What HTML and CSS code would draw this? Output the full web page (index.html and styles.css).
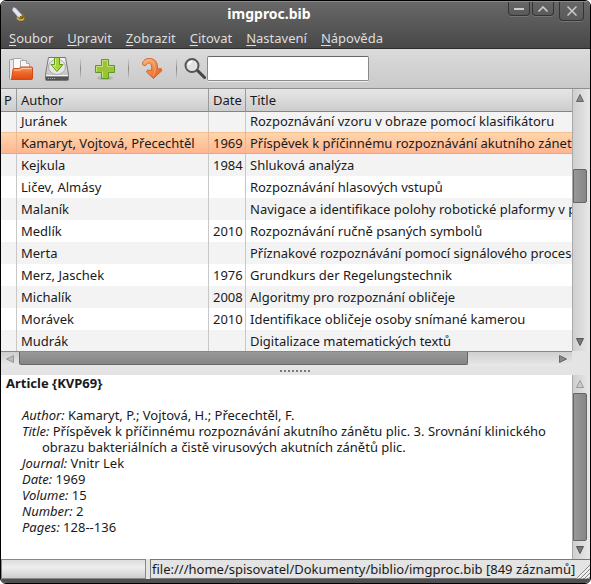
FILE: index.html
```html
<!DOCTYPE html>
<html lang="cs">
<head>
<meta charset="utf-8">
<meta name="viewport" content="width=device-width, initial-scale=1">
<title>imgproc.bib</title>
<link rel="stylesheet" href="styles.css">
</head>
<body>
<div class="window">
  <header class="frame-top">
    <div class="titlebar">
      <svg class="app-icon" width="16" height="16" viewBox="0 0 16 16" aria-hidden="true">
        <path d="M7 8c-1 4 3 7 6 5s2-5 0-7z" fill="#8a6a14"/>
        <path d="M7 10.500c1 3 5 3.500 7 1" fill="none" stroke="#d9b53a" stroke-width="1.500"/>
        <path d="M3 .5l2.500.5L12 8l-1.500 2.500L8 10 2.500 3.500z" fill="#e4e4f4" stroke="#a9a9c8" stroke-width=".5"/>
        <path d="M10 9l2 2.500" stroke="#5d4708"/>
      </svg>
      <h1 class="title">imgproc.bib</h1>
      <div class="window-buttons">
        <button class="wb" type="button" aria-label="Minimalizovat"><svg width="12" height="12" viewBox="0 0 12 12"><path d="M1 6h10" stroke="#ccc" stroke-width="2"/></svg></button>
        <button class="wb" type="button" aria-label="Maximalizovat"><svg width="12" height="12" viewBox="0 0 12 12"><path d="M1.500 8.500L6 4l4.500 4.500" fill="none" stroke="#ccc" stroke-width="1.600"/></svg></button>
        <button class="wb wb-close" type="button" aria-label="Zavřít"><svg width="12" height="12" viewBox="0 0 12 12"><path d="M1.500 1.500l9 9m0-9l-9 9" stroke="#ccc" stroke-width="1.500"/></svg></button>
      </div>
    </div>
    <nav class="menubar">
      <button type="button"><u>S</u>oubor</button>
      <button type="button"><u>U</u>pravit</button>
      <button type="button"><u>Z</u>obrazit</button>
      <button type="button"><u>C</u>itovat</button>
      <button type="button"><u>N</u>astavení</button>
      <button type="button"><u>N</u>ápověda</button>
    </nav>
  </header>

  <div class="toolbar">
    <button class="tool" type="button" aria-label="Otevřít">
      <svg width="24" height="24" viewBox="0 0 24 24">
        <defs><linearGradient id="fold" x2="0" y2="1"><stop stop-color="#f4a06a"/><stop offset=".45" stop-color="#ee6a2a"/><stop offset="1" stop-color="#e04a10"/></linearGradient></defs>
        <path d="M.5 3.500q0-1 1-1h3v20h-3q-1 0-1-1z" fill="#e9e9e9" stroke="#999"/>
        <path d="M4.500 1.500h8l3 3v14h-11z" fill="#fafafa" stroke="#aaa"/>
        <path d="M11.500 3.500h6l3 3v12h-9z" fill="#f6f6f6" stroke="#aaa"/>
        <path d="M17.500 3.500v3h3" fill="#ddd" stroke="#aaa"/>
        <path d="M2.500 22.500L4 12.500q0-1 1-1h5l2-1.500h10.500q1 0 1 1v10.500q0 1-1 1z" fill="url(#fold)" stroke="#cf4a17"/>
        <path d="M5 13h6l2-1.500h9.500" fill="none" stroke="#fbc7a4"/>
      </svg>
    </button>
    <button class="tool" type="button" aria-label="Uložit">
      <svg width="24" height="24" viewBox="0 0 24 24">
        <defs><linearGradient id="disk" x2="0" y2="1"><stop stop-color="#f4f4f4"/><stop offset="1" stop-color="#b5b5b5"/></linearGradient></defs>
        <path d="M3.500.5h17l3 17v5q0 1-1 1h-21q-1 0-1-1v-5z" fill="url(#disk)" stroke="#777"/>
        <ellipse cx="12" cy="10" rx="8.500" ry="7.500" fill="#e6e6e6" stroke="#aaa"/>
        <path d="M1 19.500h22v3.500H1z" fill="#555"/>
        <path d="M1 18.500h22" stroke="#f5f5f5"/>
        <path d="M3 21.500h8" stroke="#aaa" stroke-dasharray="1 1"/>
        <path d="M9.500.5h5v7h3.500L12 14.500 6 7.500h3.500z" fill="#a9d436" stroke="#5a9a16"/>
        <path d="M10.500 1.500v7H8l4 4.500" fill="none" stroke="#d5ee86"/>
      </svg>
    </button>
    <span class="sep"></span>
    <button class="tool" type="button" aria-label="Přidat">
      <svg width="24" height="24" viewBox="0 0 24 24">
        <ellipse cx="12" cy="21" rx="8" ry="2" fill="#999" opacity=".5"/>
        <path d="M8.500 2.500h7v6h6v7h-6v6h-7v-6h-6v-7h6z" fill="#9dc437" stroke="#5d9a22" stroke-linejoin="round"/>
        <path d="M9.500 14.500v6m-6-6v-5h6v-6h5v6h6" fill="none" stroke="#c5e07a"/>
      </svg>
    </button>
    <span class="sep"></span>
    <button class="tool" type="button" aria-label="Vložit citaci">
      <svg width="24" height="24" viewBox="0 0 24 24">
        <defs><linearGradient id="arr" x2="1" y2="1"><stop stop-color="#f6b98c"/><stop offset=".5" stop-color="#ee8c45"/><stop offset="1" stop-color="#e8501a"/></linearGradient></defs>
        <path d="M1.500 7C2 3 5 1.500 8.500 1.500c5.500 0 8.500 4 8 10.500l3.500-.5 1 2-8.500 8L5.500 15l1-2 4 .5c.5-5-.5-7.500-3-7.500-2 0-1.500 2.500-3.500 2.500C2.500 8.500 1.500 8 1.500 7z" fill="url(#arr)" stroke="#d4652c" stroke-linejoin="round"/>
        <path d="M4 4.500c5-3.500 10-1 10 8.500l-1.500 6" fill="none" stroke="#f8c39b" opacity=".6"/>
      </svg>
    </button>
    <span class="sep"></span>
    <form class="search">
      <label for="q" aria-label="Hledat">
        <svg width="22" height="24" viewBox="0 0 22 24">
          <path d="M13 13l7.500 7.500" stroke="#444" stroke-width="3" stroke-linecap="round"/>
          <circle cx="8" cy="8.500" r="6.500" fill="#e2e2e2" stroke="#555" stroke-width="2"/>
          <path d="M4.500 8q.5-3 3.500-3.500" fill="none" stroke="#fff" stroke-width="1.500"/>
        </svg>
      </label>
      <input id="q" type="text">
    </form>
  </div>

  <section class="list-pane">
    <div class="table-wrap">
      <table>
        <colgroup><col class="c-p"><col class="c-author"><col class="c-date"><col></colgroup>
        <thead><tr><th>P</th><th>Author</th><th>Date</th><th>Title</th></tr></thead>
        <tbody>
          <tr><td></td><td>Juránek</td><td></td><td>Rozpoznávání vzoru v obraze pomocí klasifikátoru</td></tr>
          <tr class="selected"><td></td><td>Kamaryt, Vojtová, Přecechtěl</td><td>1969</td><td>Příspěvek k příčinnému rozpoznávání akutního zánetu</td></tr>
          <tr><td></td><td>Kejkula</td><td>1984</td><td>Shluková analýza</td></tr>
          <tr><td></td><td>Ličev, Almásy</td><td></td><td>Rozpoznávání hlasových vstupů</td></tr>
          <tr><td></td><td>Malaník</td><td></td><td>Navigace a identifikace polohy robotické plaformy v p</td></tr>
          <tr><td></td><td>Medlík</td><td>2010</td><td>Rozpoznávání ručně psaných symbolů</td></tr>
          <tr><td></td><td>Merta</td><td></td><td>Příznakové rozpoznávání pomocí signálového proceso</td></tr>
          <tr><td></td><td>Merz, Jaschek</td><td>1976</td><td>Grundkurs der Regelungstechnik</td></tr>
          <tr><td></td><td>Michalík</td><td>2008</td><td>Algoritmy pro rozpoznání obličeje</td></tr>
          <tr><td></td><td>Morávek</td><td>2010</td><td>Identifikace obličeje osoby snímané kamerou</td></tr>
          <tr><td></td><td>Mudrák</td><td></td><td>Digitalizace matematických textů</td></tr>
        </tbody>
      </table>
    </div>
    <div class="vbar">
      <button type="button" aria-label="Nahoru"><svg width="8" height="8" viewBox="0 0 8 8"><path d="M4 .5L7.500 7.500h-7z" fill="#888" stroke="#666"/></svg></button>
      <div class="track list-track"><div class="thumb"></div></div>
      <button type="button" aria-label="Dolů"><svg width="8" height="8" viewBox="0 0 8 8"><path d="M4 7.500L.5.5h7z" fill="#777" stroke="#555"/></svg></button>
    </div>
    <div class="hbar">
      <button type="button" aria-label="Vlevo"><svg width="8" height="8" viewBox="0 0 8 8"><path d="M.5 4L7.500.5v7z" fill="#bbb" stroke="#999"/></svg></button>
      <div class="track"><div class="thumb"></div></div>
      <button type="button" aria-label="Vpravo"><svg width="8" height="8" viewBox="0 0 8 8"><path d="M7.500 4L.5.500v7z" fill="#888" stroke="#666"/></svg></button>
    </div>
  </section>

  <div class="splitter"><span class="grip"></span></div>

  <section class="detail-pane">
    <article class="detail">
      <h2>Article {KVP69}</h2>
      <p><i>Author:</i> Kamaryt, P.; Vojtová, H.; Přecechtěl, F.</p>
      <p><i>Title:</i> Příspěvek k příčinnému rozpoznávání akutního zánětu plic. 3. Srovnání klinického obrazu bakteriálních a čistě virusových akutních zánětů plic.</p>
      <p><i>Journal:</i> Vnitr Lek</p>
      <p><i>Date:</i> 1969</p>
      <p><i>Volume:</i> 15</p>
      <p><i>Number:</i> 2</p>
      <p><i>Pages:</i> 128--136</p>
    </article>
    <div class="vbar">
      <button type="button" aria-label="Nahoru"><svg width="8" height="8" viewBox="0 0 8 8"><path d="M4 .5L7.500 7.500h-7z" fill="#ccc" stroke="#999"/></svg></button>
      <div class="track"><div class="thumb"></div></div>
      <button type="button" aria-label="Dolů"><svg width="8" height="8" viewBox="0 0 8 8"><path d="M4 7.500L.5.5h7z" fill="#777" stroke="#555"/></svg></button>
    </div>
  </section>

  <footer class="statusbar">
    <div class="progress"></div>
    <div class="status">file:///home/spisovatel/Dokumenty/biblio/imgproc.bib [849 záznamů]</div>
    <svg class="resize" width="15" height="15" viewBox="0 0 15 15" aria-hidden="true">
      <path d="M1 15L15 1M5 15L15 5M9 15l6-6M13 15l2-2" stroke="#888"/>
      <path d="M2.500 15L15 2.500M6.500 15L15 6.500M10.500 15l4.500-4.500" stroke="#fff"/>
    </svg>
  </footer>
  <div class="frame-bottom"></div>
</div>
</body>
</html>
```
FILE: styles.css
```css
* { box-sizing: border-box; }

body {
  margin: 0;
  background: #fff;
  color: #1a1a1a;
  font: 13px/16px "Noto Sans", "Open Sans", sans-serif;
}

button {
  margin: 0;
  padding: 0;
  border: 0;
  background: none;
  color: inherit;
  font: inherit;
}

svg { display: block; }

.window {
  display: flex;
  flex-direction: column;
  height: 100vh;
  min-height: 480px;
  border: 1px solid #000;
  border-radius: 6px;
  background: #e4e4e4;
  overflow: hidden;
}

/* Title and menu */
.frame-top {
  height: 48px;
  flex: none;
  border-top: 1px solid #8a8a8a;
  border-bottom: 1px solid #2c2c2c;
  background: linear-gradient(#686868, #484848);
  color: #dedede;
}

.frame-bottom {
  height: 4px;
  flex: none;
  background: #505050;
}

.titlebar {
  display: flex;
  height: 26px;
  padding: 0 6px 0 9px;
}

.app-icon { margin-top: 5px; }

.title {
  flex: 1;
  margin: 0;
  padding-left: 4px;
  color: #fff;
  font-size: 14px;
  line-height: 24px;
  text-align: center;
}

.window-buttons {
  display: flex;
  align-items: flex-start;
  gap: 2px;
}

.wb {
  display: grid;
  place-items: center;
  width: 22px;
  height: 14px;
  border: 1px solid #333;
  border-top: 0;
  border-radius: 0 0 4px 4px;
  background: linear-gradient(#666, #5a5a5a);
  box-shadow: 0 1px #757575;
}

.wb-close {
  width: 25px;
  height: 19px;
  margin-left: 3px;
}

.menubar {
  display: flex;
  gap: 14px;
  padding-left: 8px;
}

.menubar button { line-height: 20px; }
.menubar u { text-underline-offset: 2px; }

/* Toolbar */
.toolbar {
  display: flex;
  align-items: center;
  flex: none;
  height: 40px;
  padding-left: 2px;
  border-bottom: 1px solid #8f8f8f;
  background: linear-gradient(#dbdbdb, #c9c9c9);
}

.tool { padding: 0 6px; }

.sep {
  width: 1px;
  height: 20px;
  margin: 0 6px 0 5px;
  background: linear-gradient(#ccc, #888 50%, #ccc);
}

.search {
  display: flex;
  flex: 0 1 186px;
  align-items: center;
  gap: 1px;
  min-width: 0;
  padding-left: 1px;
}

.search input {
  flex: 1;
  min-width: 0;
  height: 25px;
  padding: 0 4px;
  border: 1px solid #8a8a8a;
  border-top-color: #666;
  border-radius: 2px;
  background: #fff;
  box-shadow: 0 1px #eee;
  font: inherit;
}

/* Reference list */
.list-pane {
  display: grid;
  grid-template-columns: minmax(0, 1fr) 18px;
  flex: none;
}

.table-wrap { overflow: hidden; }

table {
  width: 100%;
  border-collapse: separate;
  border-spacing: 0;
  table-layout: fixed;
}

.c-p { width: 16px; }
.c-author { width: 192px; }
.c-date { width: 37px; }

th, td {
  height: 22px;
  padding: 0 0 0 4px;
  overflow: hidden;
  border-right: 1px solid #c8c8c8;
  text-align: left;
  white-space: nowrap;
}

th {
  height: 23px;
  border-right-color: #999;
  border-bottom: 1px solid #858585;
  background: linear-gradient(#e6e6e6, #cdcdcd);
  font-weight: 400;
}

th:first-child { padding-left: 3px; }
th:last-child, td:last-child { border-right: 0; }

td { background: #fff; }
tbody tr:nth-child(odd) td { background: #f3f3f3; }
tbody tr:first-child td { height: 20px; padding-bottom: 2px; }
tbody tr:last-child td { height: 21px; }

.selected td {
  border-top: 1px solid #f6bf90;
  border-bottom: 1px solid #f2a080;
  border-right-color: #e8b595;
  background: linear-gradient(#ffd6ab, #ffb592);
}

/* Scroll bars */
.vbar {
  display: flex;
  flex-direction: column;
  padding-right: 3px;
  border-left: 1px solid #aaa;
  background: linear-gradient(90deg, #cfcfcf, #e8e8e8);
}

.vbar button {
  display: grid;
  place-items: center;
  height: 18px;
}

.hbar {
  display: flex;
  height: 15px;
  padding-bottom: 1px;
  border-top: 1px solid #888;
  background: linear-gradient(#cfcfcf, #e8e8e8);
}

.hbar button {
  display: grid;
  place-items: center;
  width: 18px;
}

.track { flex: 1; }

.thumb {
  border: 1px solid #666;
  border-radius: 0 2px 2px 0;
  background: linear-gradient(90deg, #999, #858585);
}

.vbar .thumb { height: 100%; }

.vbar .list-track { padding-top: 62px; }
.vbar .list-track .thumb { height: 34px; }

.hbar .thumb {
  width: 84%;
  height: 100%;
  border-top: 0;
  border-radius: 0 0 2px 2px;
  background: linear-gradient(#999, #858585);
}

.splitter {
  display: grid;
  flex: none;
  height: 9px;
  place-items: center;
}

.grip {
  width: 31px;
  height: 2px;
  background: repeating-linear-gradient(90deg, #777 0 2px, transparent 2px 4px);
}

/* Record detail */
.detail-pane {
  display: grid;
  grid-template-columns: minmax(0, 1fr) 18px;
  flex: 1;
  min-height: 0;
}

.detail {
  padding: 0 12px 0 5px;
  overflow: hidden;
  background: #fff;
}

.detail h2 {
  margin: 0 0 16px;
  font-size: 13px;
  line-height: 16px;
}

.detail p {
  margin: 0 0 0 36px;
  text-indent: -20px;
}

/* Status bar */
.statusbar {
  position: relative;
  display: flex;
  flex: none;
  gap: 4px;
  height: 20px;
}

.progress {
  flex: 0 0 145px;
  border: 1px solid #888;
  background: linear-gradient(#dcdcdc, #eee 40%, #cfcfcf);
}

.status {
  flex: 1;
  min-width: 0;
  overflow: hidden;
  padding-left: 1px;
  border: 1px solid #777;
  border-right: 0;
  line-height: 19px;
  white-space: nowrap;
}

.resize {
  position: absolute;
  right: 0;
  bottom: 0;
}
```
